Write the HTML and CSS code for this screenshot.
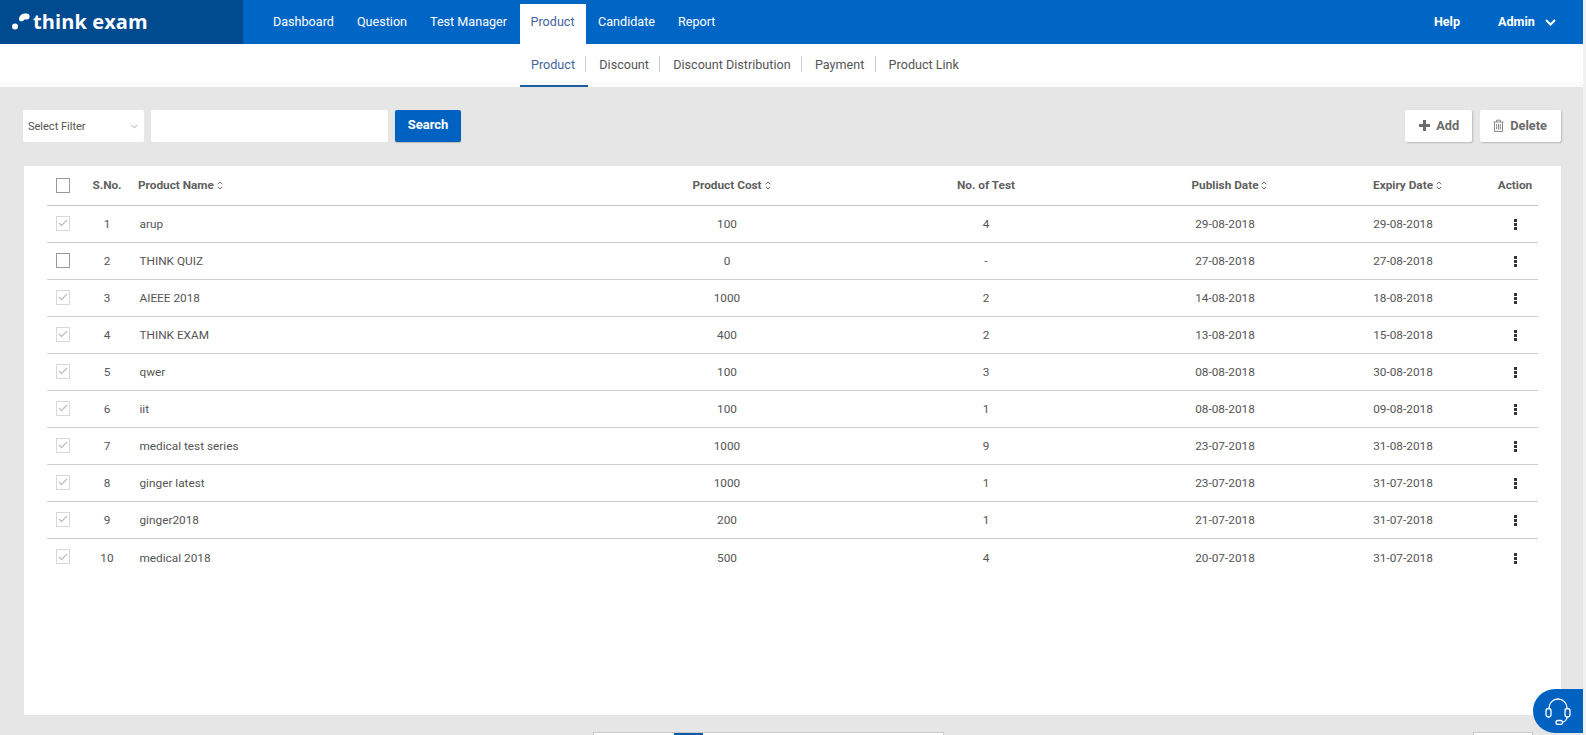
FILE: index.html
```html
<!DOCTYPE html>
<html lang="en">
<head>
<meta charset="utf-8">
<title>Product</title>
<link rel="stylesheet" href="styles.css">
</head>
<body>
<div class="page">
<header class="topbar">
  <div class="brand">
    <svg class="brand-mark" width="18" height="18" viewBox="0 0 18 18"><circle cx="3" cy="13.500" r="3" fill="#fff"/><path d="M7 6.500C7 3 9.500.5 13 .5h1.500a3 3 0 0 1 .2 6h-1.200c-1 0-1.600.5-2.200 1.200-1.300 1.200-4.300.6-4.300-1.200z" fill="#fff"/></svg>
    <span class="brand-text">think exam</span>
  </div>
  <nav class="mainnav">
    <a class="mainnav-item">Dashboard</a>
    <a class="mainnav-item">Question</a>
    <a class="mainnav-item">Test Manager</a>
    <a class="mainnav-item is-active">Product</a>
    <a class="mainnav-item">Candidate</a>
    <a class="mainnav-item">Report</a>
  </nav>
  <div class="usernav">
    <a class="usernav-item">Help</a>
    <a class="usernav-item">Admin
      <svg class="usernav-caret" width="11" height="7" viewBox="0 0 11 7"><path d="M1 1l4.500 4.500L10 1" fill="none" stroke="#fff" stroke-width="2"/></svg>
    </a>
  </div>
</header>
<nav class="subnav">
  <a class="subnav-item is-active">Product</a>
  <a class="subnav-item">Discount</a>
  <a class="subnav-item">Discount Distribution</a>
  <a class="subnav-item">Payment</a>
  <a class="subnav-item">Product Link</a>
</nav>
<main class="content">
  <div class="toolbar">
    <div class="select">Select Filter
      <svg class="select-caret" width="7" height="5" viewBox="0 0 7 5"><path d="M.5.8l3 3 3-3" fill="none" stroke="#aaa" stroke-width="1"/></svg>
    </div>
    <div class="input"></div>
    <button class="btn-search">Search</button>
    <div class="toolbar-right">
      <button class="btn-light btn-add">
        <svg width="11" height="11" viewBox="0 0 11 11"><path d="M5.500 0v11M0 5.500h11" stroke="#6b6b6b" stroke-width="3"/></svg>
        Add
      </button>
      <button class="btn-light btn-delete">
        <svg width="11" height="13" viewBox="0 0 11 13"><path d="M.5 3h10M3.500 3V1.200h4V3M1.500 3v9.500h8V3M3.700 5v5.500M5.500 5v5.500M7.300 5v5.500" fill="none" stroke="#8a8a8a" stroke-width="1"/></svg>
        Delete
      </button>
    </div>
  </div>
  <section class="card">
    <div class="row row-head">
      <div class="c-check"><span class="box"></span></div>
      <div class="c-no">S.No.</div>
      <div class="c-name">Product Name <svg class="sort" width="6" height="9" viewBox="0 0 7 10"><path d="M.8 3.500L3.500 1l2.700 2.500M.8 6.500L3.500 9l2.700-2.500" fill="none" stroke="#666" stroke-width="1.100"/></svg></div>
      <div class="c-cost">Product Cost <svg class="sort" width="6" height="9" viewBox="0 0 7 10"><path d="M.8 3.500L3.500 1l2.700 2.500M.8 6.500L3.500 9l2.700-2.500" fill="none" stroke="#666" stroke-width="1.100"/></svg></div>
      <div class="c-test">No. of Test</div>
      <div class="c-pub">Publish Date <svg class="sort" width="6" height="9" viewBox="0 0 7 10"><path d="M.8 3.500L3.500 1l2.700 2.500M.8 6.500L3.500 9l2.700-2.500" fill="none" stroke="#666" stroke-width="1.100"/></svg></div>
      <div class="c-exp">Expiry Date <svg class="sort" width="6" height="9" viewBox="0 0 7 10"><path d="M.8 3.500L3.500 1l2.700 2.500M.8 6.500L3.500 9l2.700-2.500" fill="none" stroke="#666" stroke-width="1.100"/></svg></div>
      <div class="c-act">Action</div>
    </div>
    <div class="row"><div class="c-check"><span class="box box-off"><svg width="10" height="8" viewBox="0 0 10 8"><path d="M1 4l2.500 2.500L9 1" fill="none" stroke="#c4c4c4" stroke-width="1.500"/></svg></span></div><div class="c-no">1</div><div class="c-name">arup</div><div class="c-cost">100</div><div class="c-test">4</div><div class="c-pub">29-08-2018</div><div class="c-exp">29-08-2018</div><div class="c-act"><span class="dots"><i></i><i></i><i></i></span></div></div>
    <div class="row"><div class="c-check"><span class="box"></span></div><div class="c-no">2</div><div class="c-name">THINK QUIZ</div><div class="c-cost">0</div><div class="c-test">-</div><div class="c-pub">27-08-2018</div><div class="c-exp">27-08-2018</div><div class="c-act"><span class="dots"><i></i><i></i><i></i></span></div></div>
    <div class="row"><div class="c-check"><span class="box box-off"><svg width="10" height="8" viewBox="0 0 10 8"><path d="M1 4l2.500 2.500L9 1" fill="none" stroke="#c4c4c4" stroke-width="1.500"/></svg></span></div><div class="c-no">3</div><div class="c-name">AIEEE 2018</div><div class="c-cost">1000</div><div class="c-test">2</div><div class="c-pub">14-08-2018</div><div class="c-exp">18-08-2018</div><div class="c-act"><span class="dots"><i></i><i></i><i></i></span></div></div>
    <div class="row"><div class="c-check"><span class="box box-off"><svg width="10" height="8" viewBox="0 0 10 8"><path d="M1 4l2.500 2.500L9 1" fill="none" stroke="#c4c4c4" stroke-width="1.500"/></svg></span></div><div class="c-no">4</div><div class="c-name">THINK EXAM</div><div class="c-cost">400</div><div class="c-test">2</div><div class="c-pub">13-08-2018</div><div class="c-exp">15-08-2018</div><div class="c-act"><span class="dots"><i></i><i></i><i></i></span></div></div>
    <div class="row"><div class="c-check"><span class="box box-off"><svg width="10" height="8" viewBox="0 0 10 8"><path d="M1 4l2.500 2.500L9 1" fill="none" stroke="#c4c4c4" stroke-width="1.500"/></svg></span></div><div class="c-no">5</div><div class="c-name">qwer</div><div class="c-cost">100</div><div class="c-test">3</div><div class="c-pub">08-08-2018</div><div class="c-exp">30-08-2018</div><div class="c-act"><span class="dots"><i></i><i></i><i></i></span></div></div>
    <div class="row"><div class="c-check"><span class="box box-off"><svg width="10" height="8" viewBox="0 0 10 8"><path d="M1 4l2.500 2.500L9 1" fill="none" stroke="#c4c4c4" stroke-width="1.500"/></svg></span></div><div class="c-no">6</div><div class="c-name">iit</div><div class="c-cost">100</div><div class="c-test">1</div><div class="c-pub">08-08-2018</div><div class="c-exp">09-08-2018</div><div class="c-act"><span class="dots"><i></i><i></i><i></i></span></div></div>
    <div class="row"><div class="c-check"><span class="box box-off"><svg width="10" height="8" viewBox="0 0 10 8"><path d="M1 4l2.500 2.500L9 1" fill="none" stroke="#c4c4c4" stroke-width="1.500"/></svg></span></div><div class="c-no">7</div><div class="c-name">medical test series</div><div class="c-cost">1000</div><div class="c-test">9</div><div class="c-pub">23-07-2018</div><div class="c-exp">31-08-2018</div><div class="c-act"><span class="dots"><i></i><i></i><i></i></span></div></div>
    <div class="row"><div class="c-check"><span class="box box-off"><svg width="10" height="8" viewBox="0 0 10 8"><path d="M1 4l2.500 2.500L9 1" fill="none" stroke="#c4c4c4" stroke-width="1.500"/></svg></span></div><div class="c-no">8</div><div class="c-name">ginger latest</div><div class="c-cost">1000</div><div class="c-test">1</div><div class="c-pub">23-07-2018</div><div class="c-exp">31-07-2018</div><div class="c-act"><span class="dots"><i></i><i></i><i></i></span></div></div>
    <div class="row"><div class="c-check"><span class="box box-off"><svg width="10" height="8" viewBox="0 0 10 8"><path d="M1 4l2.500 2.500L9 1" fill="none" stroke="#c4c4c4" stroke-width="1.500"/></svg></span></div><div class="c-no">9</div><div class="c-name">ginger2018</div><div class="c-cost">200</div><div class="c-test">1</div><div class="c-pub">21-07-2018</div><div class="c-exp">31-07-2018</div><div class="c-act"><span class="dots"><i></i><i></i><i></i></span></div></div>
    <div class="row row-last"><div class="c-check"><span class="box box-off"><svg width="10" height="8" viewBox="0 0 10 8"><path d="M1 4l2.500 2.500L9 1" fill="none" stroke="#c4c4c4" stroke-width="1.500"/></svg></span></div><div class="c-no">10</div><div class="c-name">medical 2018</div><div class="c-cost">500</div><div class="c-test">4</div><div class="c-pub">20-07-2018</div><div class="c-exp">31-07-2018</div><div class="c-act"><span class="dots"><i></i><i></i><i></i></span></div></div>
  </section>
  <div class="pager-strip">
    <div class="pager"><span class="pager-current"></span></div>
    <div class="pager-end"></div>
  </div>
</main>
</div>
<div class="help-fab">
  <svg width="26" height="27" viewBox="0 0 26 27" fill="none" stroke="#fff" stroke-width="1.300"><path d="M4 11V10a9 9 0 0 1 18 0v1"/><rect x="1" y="10.500" width="5" height="8.500" rx="2.500"/><rect x="20" y="10.500" width="5" height="8.500" rx="2.500"/><path d="M22 19c0 3-2.500 5-5 5.200"/><rect x="11" y="22.500" width="6.500" height="3.800" rx="1.900"/></svg>
</div>
</body>
</html>
```
FILE: styles.css
```css
* { box-sizing: border-box; }
html, body { margin: 0; height: 100%; overflow: hidden; }
body { font-family: Roboto, "Liberation Sans", sans-serif; font-size: 12px; color: #555; background: #f1f1f1; }
.page { width: 1583px; height: 735px; display: flex; flex-direction: column; overflow: hidden; background: #e6e6e6; }

.topbar { flex: 0 0 44px; display: flex; background: #0066c6; color: #fff; }
.brand { width: 243px; background: #004a8f; display: flex; align-items: center; padding-left: 12px; gap: 3px; }
.brand-text { font: 700 20px "Open Sans", sans-serif; letter-spacing: .1px; line-height: 44px; }
.mainnav { display: flex; margin-left: 18.500px; padding-top: 4px; }
.mainnav-item { padding: 0 11.500px; font-size: 12.600px; line-height: 35px; height: 40px; color: #fff; }
.mainnav-item.is-active { background: #fff; color: #44659f; padding: 0 11px; margin: 0 1px; }
.usernav { margin-left: auto; display: flex; font-weight: 700; font-size: 12.600px; line-height: 43px; }
.usernav-item { color: #fff; display: block; }
.usernav-item + .usernav-item { margin-left: 38px; margin-right: 27px; }
.usernav-caret { margin-left: 7px; }

.subnav { flex: 0 0 43px; background: linear-gradient(#fff 38px, #fbfbfb 38px); display: flex; padding-left: 520px; }
.subnav-item { position: relative; font-size: 12.600px; color: #555; padding: 0 13.300px 0 11px; line-height: 41px; height: 43px; }
.subnav-item::after { content: ""; position: absolute; right: 2px; top: 12px; height: 16px; width: 1px; background: #ccc; }
.subnav-item:last-child::after { display: none; }
.subnav-item.is-active { color: #44659f; border-bottom: 2px solid #1d5c9e; }

.content { flex: 1; padding: 23px 22px 0 23px; min-height: 0; }
.toolbar { display: flex; height: 32px; }
.select { width: 121px; background: #fff; font-size: 11px; line-height: 33px; padding-left: 5px; position: relative; color: #555; border-radius: 2px; }
.select-caret { position: absolute; right: 6px; top: 14px; }
.input { width: 237px; margin-left: 7px; background: #fff; border-radius: 2px; }
.btn-search { width: 66px; margin-left: 7px; background: #0062c0; border: 0; border-radius: 2px; color: #fff; font: 700 13px Roboto, sans-serif; padding: 0 0 3px; box-shadow: 0 1px 1px rgba(0,0,0,.2); }
.toolbar-right { margin-left: auto; display: flex; gap: 8px; }
.btn-light { height: 32px; background: #fff; border: 0; border-radius: 2px; box-shadow: 1px 1px 2px rgba(0,0,0,.2); font: 700 12.800px Roboto, sans-serif; color: #6b6b6b; display: flex; align-items: center; gap: 6px; padding: 0 14px 1px; }
.btn-add { padding: 0 13px 1px 14px; }
.btn-delete { padding: 0 14px 1px 13px; }

.card { margin-top: 24px; margin-left: 1px; width: 1537px; height: 549px; background: #fff; padding: 0 23px; }
.row { display: grid; grid-template-columns: 29px 62px 480px 218px 300px 178px 178px 46px; align-items: center; height: 37px; border-bottom: 1px solid #cfcfcf; text-align: center; font-size: 11.800px; white-space: nowrap; }
.row-head { height: 40px; font-weight: 700; color: #5f5f5f; font-size: 11.800px; line-height: 1; border-bottom: 1px solid #c4c4c4; }
.row-last { border-bottom: 0; }
.c-name { text-align: left; padding-left: 1.500px; }
.row-head .c-name { padding-left: 0; }
.row-head .c-cost, .row-head .c-pub, .row-head .c-exp { padding-left: 9px; }
.c-check { display: flex; padding-left: 9px; }
.box { width: 14px; height: 15px; border: 1px solid #9a9a9a; background: #fff; display: flex; align-items: center; justify-content: center; }
.row:not(.row-head) .box { margin-top: -2px; }
.box-off { border-color: #d8d8d8; }
.sort { vertical-align: -1px; margin-left: 0; }
.dots { display: inline-flex; flex-direction: column; gap: 1px; vertical-align: middle; }
.dots i { width: 3px; height: 3px; background: #333; display: block; }

.pager-strip { display: flex; margin-top: 17px; height: 20px; }
.pager { margin-left: 570px; width: 351px; height: 20px; background: #fff; border: 1px solid #c8c8c8; border-bottom: 0; }
.pager-current { display: block; margin-left: 80px; width: 29px; height: 20px; background: #0a5cab; }
.pager-end { margin-left: 529px; width: 60px; height: 20px; background: #fff; border: 1px solid #c8c8c8; border-bottom: 0; }

.help-fab { position: fixed; left: 1533px; top: 689px; width: 50px; height: 44px; background: #0062c0; border-radius: 22px 0 0 22px; display: flex; align-items: center; justify-content: center; }
```
